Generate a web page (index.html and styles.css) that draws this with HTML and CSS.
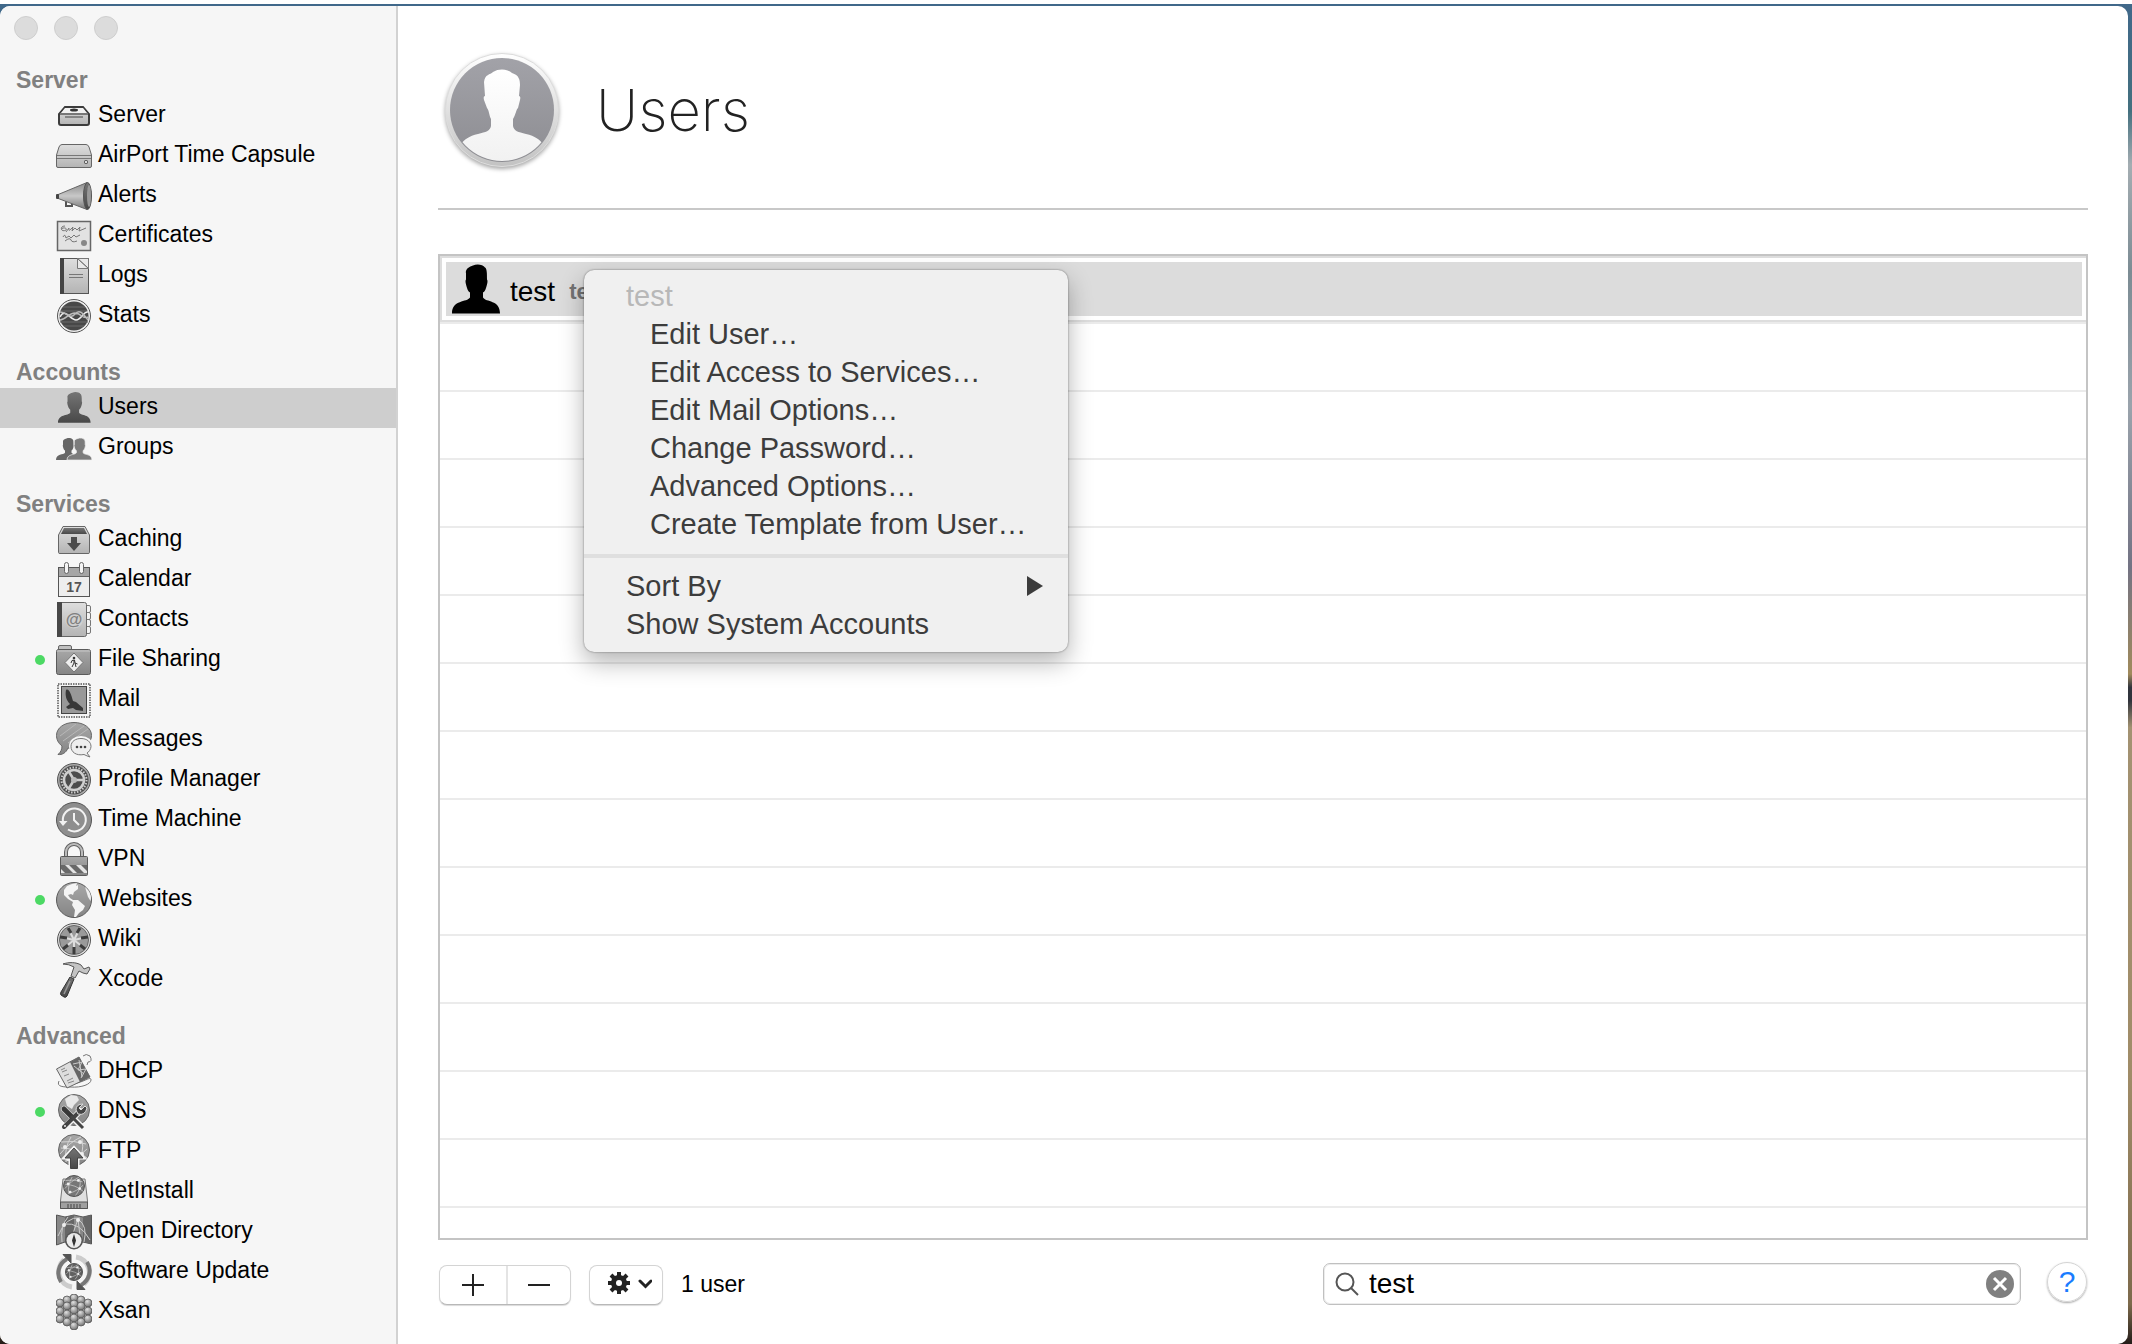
FILE: index.html
```
<!DOCTYPE html>
<html lang="en">
<head>
    <meta charset="UTF-8">
    <meta name="viewport" content="width=device-width, initial-scale=1.0">
    <title>Users</title>
    <link rel="stylesheet" href="styles.css">
</head>
<body>
    <!-- shared gradients and shapes -->
    <svg class="defs" width="0" height="0" aria-hidden="true">
        <defs>
            <linearGradient id="light" x1="0" y1="0" x2="0" y2="1"><stop offset="0" stop-color="#dedede"/><stop offset="1" stop-color="#b4b4b4"/></linearGradient>
            <linearGradient id="mid" x1="0" y1="0" x2="0" y2="1"><stop offset="0" stop-color="#a8a8a8"/><stop offset="1" stop-color="#858585"/></linearGradient>
            <linearGradient id="dark" x1="0" y1="0" x2="0" y2="1"><stop offset="0" stop-color="#757575"/><stop offset="1" stop-color="#484848"/></linearGradient>
            <linearGradient id="cone" x1="0" y1="0" x2="0" y2="1"><stop offset="0" stop-color="#8a8a8a"/><stop offset=".5" stop-color="#c8c8c8"/><stop offset="1" stop-color="#777"/></linearGradient>
            <linearGradient id="ring" x1="0" y1="0" x2="0" y2="1"><stop offset="0" stop-color="#fff"/><stop offset="1" stop-color="#c2c2c2"/></linearGradient>
            <linearGradient id="disc" x1="0" y1="0" x2="0" y2="1"><stop offset="0" stop-color="#a2a2a8"/><stop offset="1" stop-color="#8d8d92"/></linearGradient>
            <linearGradient id="face" x1="0" y1="0" x2="0" y2="1"><stop offset="0" stop-color="#fff"/><stop offset="1" stop-color="#f0f0f0"/></linearGradient>
            <radialGradient id="ball" cx=".4" cy=".3" r=".7"><stop offset="0" stop-color="#e0e0e0"/><stop offset="1" stop-color="#707070"/></radialGradient>
            <clipPath id="disc-clip"><circle cx="60" cy="60" r="51"/></clipPath>
            <path id="person" d="M14 9C13 5 17 2 21 1C25-1 31 0 33 3C35 4 35 9 35 15Q36 16 35 20C34 24 33 27 31 28V33C34 38 48 35 48 49H0C0 35 15 38 18 33V28C16 27 15 24 14 20Q13 16 14 15Z"/>
            <g id="net" fill="none" stroke="#d4d4d4">
                <path d="M5 8Q18 6 30 10M4 20Q14 8 25 3M10 28Q8 14 15 3M20 30Q29 20 26 5M5 14Q20 14 31 24M10 27Q22 24 31 15"/>
                <g fill="#eee" stroke="none"><circle cx="9" cy="13" r="2"/><circle cx="24" cy="8" r="2"/><circle cx="26" cy="20" r="2"/><circle cx="12" cy="25" r="2"/></g>
            </g>
        </defs>
    </svg>

    <div class="desktop">
        <div class="window">
            <aside class="sidebar">
                <div class="lights">
                    <button aria-label="Close"></button>
                    <button aria-label="Minimize"></button>
                    <button aria-label="Zoom"></button>
                </div>
                <nav>
                    <h2>Server</h2>
                    <ul>
                        <li><a href="#"><svg viewBox="0 0 36 36"><path d="M9 9H27L33 16V25Q33 27 31 27H5Q3 27 3 25V16Z" fill="url(#light)" stroke="#3c3c3c" stroke-width="2"/><path d="M9 10H27L31 15H5Z" fill="#f2f2f2"/><path d="M4 16H32" stroke="#777" stroke-width="2"/><path d="M9 19H27" stroke="#444"/><ellipse cx="18" cy="12" rx="4" ry="1.500" fill="#333"/></svg>Server</a></li>
                        <li><a href="#"><svg viewBox="0 0 36 36"><path d="M6 6.500H30Q32 6.500 33 9L35.500 17V28Q35.500 29.500 34 29.500H2Q.5 29.500 .5 28V17L3 9Q4 6.500 6 6.500Z" fill="url(#light)" stroke="#666"/><path d="M1 17.500H35M1 20.500H35" stroke="#777"/><rect x="28.500" y="22.500" width="3" height="3" rx="1" fill="#ddd" stroke="#444"/></svg>AirPort Time Capsule</a></li>
                        <li><a href="#"><svg viewBox="0 0 36 36"><path d="M10 21V28H16V24" fill="none" stroke="#555" stroke-width="2"/><path d="M1 17L31 4.500V31.500L1 20Z" fill="url(#cone)" stroke="#666"/><ellipse cx="31.500" cy="18" rx="4" ry="13.500" fill="url(#dark)" stroke="#555"/><ellipse cx="33" cy="18" rx="2" ry="11" fill="#999"/><rect y="16" width="3" height="5" rx="1" fill="#444"/></svg>Alerts</a></li>
                        <li><a href="#"><svg viewBox="0 0 36 36"><rect x="1.500" y="3.500" width="33" height="29" fill="#e2e2e2" stroke="#666" stroke-width="1.500"/><path d="M9 8C3 8 5 15 10 12C12 10 6 9 6 11M10 14L13 10Q12 14 15 11L17 9L16 13L19 10L21 12L24 9L23 13L30 10M7 19Q9 15 10 20L13 18L15 20L18 17L20 19L24 17M9 23Q14 19 15 22T21 23" fill="none" stroke="#777"/><circle cx="28" cy="25" r="3" fill="#888"/></svg>Certificates</a></li>
                        <li><a href="#"><svg viewBox="0 0 36 36"><rect x="4.500" y=".5" width="28" height="35" fill="url(#light)" stroke="#555"/><path d="M4 0H8V36H4Z" fill="#444"/><path d="M21.500 .5V10.500H32.500ZM21.500 .5L32.500 10.500V.5Z" fill="#e8e8e8" stroke="#777"/><path d="M13 16.500H27M13 19.500H27" stroke="#777"/></svg>Logs</a></li>
                        <li><a href="#"><svg viewBox="0 0 36 36"><circle cx="18" cy="18" r="16.500" fill="#eee" stroke="#555"/><circle cx="18" cy="18" r="14.500" fill="#484848"/><path d="M7 9H29M5 13H31M4 24H32M8 28H28" stroke="#6a6a6a"/><path d="M4 19C9 9 14 22 20 22S27 13 32 14" fill="none" stroke="#eee" stroke-width="1.500"/><path d="M4 14C11 14 14 22 19 16S28 17 32 22M4 22C10 22 12 15 19 15S26 22 32 19" fill="none" stroke="#bbb" stroke-width="1.500"/></svg>Stats</a></li>
                    </ul>
                    <h2>Accounts</h2>
                    <ul>
                        <li><a href="#" class="active"><svg viewBox="0 0 36 36"><g transform="translate(2 2) scale(.68 .63)" fill="url(#dark)"><use href="#person"/></g></svg>Users</a></li>
                        <li><a href="#"><svg viewBox="0 0 36 36"><g transform="translate(0 8) scale(.5 .45)" fill="#666"><use href="#person"/></g><g transform="translate(11 8) scale(.52 .45)" fill="#7c7c7c" stroke="#f0f0f0" stroke-width="1.500"><use href="#person"/></g></svg>Groups</a></li>
                    </ul>
                    <h2>Services</h2>
                    <ul>
                        <li><a href="#"><svg viewBox="0 0 36 36"><path d="M7 4.500H29L33.500 13V30.500Q33.500 31.500 32 31.500H4Q2.500 31.500 2.500 30.500V13Z" fill="url(#light)" stroke="#666"/><path d="M8 6H28L31 12H5Z" fill="url(#dark)"/><path d="M15 15H21V21H25L18 29L11 21H15Z" fill="#4c4c4c"/></svg>Caching</a></li>
                        <li><a href="#"><svg viewBox="0 0 36 36"><rect x="2.500" y="5.500" width="31" height="29" fill="#eee" stroke="#555"/><path d="M3 6H33V15H3Z" fill="#a6a6a6"/><path d="M3 14.500H33" stroke="#666"/><rect x="8.500" y=".5" width="4" height="11" rx="2" fill="#f4f4f4" stroke="#666"/><rect x="23.500" y=".5" width="4" height="11" rx="2" fill="#f4f4f4" stroke="#666"/><text x="18" y="30" text-anchor="middle" font-size="14" font-weight="bold" fill="#555">17</text></svg>Calendar</a></li>
                        <li><a href="#"><svg viewBox="0 0 36 36"><path d="M29 3.500H33Q34.500 3.500 34.500 5V9Q34.500 10.500 33 10.500Q34.500 10.500 34.500 12V16Q34.500 17.500 33 17.500Q34.500 17.500 34.500 19V23Q34.500 24.500 33 24.500Q34.500 24.500 34.500 26V30Q34.500 31.500 33 31.500H29M29 10.500H33M29 17.500H33M29 24.500H33" fill="#f4f4f4" stroke="#777"/><rect x="1.500" y=".5" width="29" height="34" rx="2" fill="url(#light)" stroke="#666"/><path d="M1 0H6V35H1Z" fill="#484848"/><circle cx="18" cy="17.500" r="9" fill="#d0d0d0"/><text x="18" y="23" text-anchor="middle" font-size="17" font-weight="bold" fill="#808080">@</text></svg>Contacts</a></li>
                        <li><a href="#" class="running"><svg viewBox="0 0 36 36"><path d="M2.500 8V5Q2.500 3.500 4 3.500H14Q15.500 3.500 15.500 5V8" fill="#c0c0c0" stroke="#666"/><rect x=".5" y="7.500" width="34" height="25" rx="2" fill="url(#mid)" stroke="#5a5a5a"/><path d="M1 9H34" stroke="#c8c8c8"/><path d="M18 11L27 20.500L18 30L9 20.500Z" fill="#eee" stroke="#777"/><circle cx="18" cy="16" r="1.300" fill="#333"/><path d="M15 21L16 18.500L18.500 18L19 21L21.500 22M18 18V21L16 25M19 21L20 25" fill="none" stroke="#333"/></svg>File Sharing</a></li>
                        <li><a href="#"><svg viewBox="0 0 36 36"><rect x="2" y="2" width="32" height="33" fill="#f4f4f4" stroke="#555" stroke-width="1.500" stroke-dasharray="1.500 1"/><rect x="5.500" y="4.500" width="25" height="27" fill="#989898" stroke="#444"/><path d="M10 8C13 6 15 12 17 19L20 20L27 26V29L20 28L17 26L12 27L10 25L14 22C10 18 9 13 10 8Z" fill="#383838"/></svg>Mail</a></li>
                        <li><a href="#"><svg viewBox="0 0 36 36"><path d="M18 .5C28 .5 35.500 6 35.500 13.500S28 27 18 27L12 26C10 31 6 33 2 32.500C5 30 6 27 6 24C2 21 .5 17 .5 13.500C.5 6 8 .5 18 .5Z" fill="url(#mid)" stroke="#666"/><path d="M4 14L20 2M7 19L28 4M12 21L32 7" stroke="#b8b8b8"/><path d="M25 15.500C31 15.500 35.500 19 35.500 24C35.500 27 34 29 31 31L35 35.500Q31 35 28 32.500C20 34 14.500 30 14.500 24.500S19 15.500 25 15.500Z" fill="#f0f0f0" stroke="#f6f6f6" stroke-width="3"/><path d="M25 16.500C31 16.500 35 20 35 24.500C35 27 33 30 31 31L34 35Q31 34 28 32.500C20 34 15 30 15 24.500S20 16.500 25 16.500Z" fill="#eee" stroke="#777"/><g fill="#444"><circle cx="21" cy="25" r="1.300"/><circle cx="25" cy="25" r="1.300"/><circle cx="29" cy="25" r="1.300"/></g></svg>Messages</a></li>
                        <li><a href="#"><svg viewBox="0 0 36 36"><circle cx="18" cy="18" r="16.500" fill="#aaa" stroke="#555"/><circle cx="18" cy="18" r="14.500" fill="#4c4c4c"/><circle cx="18" cy="18" r="12.500" fill="none" stroke="#ccc" stroke-width="2" stroke-dasharray="1.500 1.500"/><circle cx="18" cy="18" r="10" fill="none" stroke="#d0d0d0" stroke-width="2.500"/><path d="M18 18L12.500 9M18 18H28M18 18L12.500 27" stroke="#ccc" stroke-width="2.500"/><circle cx="18" cy="18" r="3" fill="#bbb"/></svg>Profile Manager</a></li>
                        <li><a href="#"><svg viewBox="0 0 36 36"><circle cx="18" cy="18" r="17.500" fill="#8e8e8e" stroke="#555"/><path d="M7 20A11.500 11.500 0 1 1 12 27.500" fill="none" stroke="#f2f2f2" stroke-width="2"/><path d="M3 19H11.500L7 24Z" fill="#f2f2f2"/><path d="M18 11V18L23 23" fill="none" stroke="#f2f2f2" stroke-width="2"/></svg>Time Machine</a></li>
                        <li><a href="#"><svg viewBox="0 0 36 36"><path d="M10 15V10A8 8 0 0 1 26 10V15" fill="none" stroke="#606060" stroke-width="4"/><path d="M10 15V10A8 8 0 0 1 26 10V15" fill="none" stroke="#bbb" stroke-width="2"/><rect x="4.500" y="14.500" width="27" height="19" rx="1" fill="url(#mid)" stroke="#5a5a5a"/><path d="M5 23H31V31H5Z" fill="#e4e4e4"/><path d="M5 23H9L17 31H9L5 27ZM13 23H20L28 31H21ZM25 23H31V29Z" fill="#686868"/></svg>VPN</a></li>
                        <li><a href="#" class="running"><svg viewBox="0 0 36 36"><circle cx="18" cy="18" r="17.500" fill="url(#mid)" stroke="#5a5a5a"/><path d="M8 8L11 4L16 2L21 1L20 4L22 3L22 7L18 10L17 13L15 12L12 13L14 16L17 18L22 18L29 24L27 28L23 31L20 35H18L19 28L16 23L17 20L12 17L8 13Z" fill="#f4f4f4"/><path d="M29 5C34 9 36 14 34.500 19L32 15Z" fill="#eee"/></svg>Websites</a></li>
                        <li><a href="#"><svg viewBox="0 0 36 36"><circle cx="18" cy="18" r="16.500" fill="#ddd" stroke="#555"/><circle cx="18" cy="18" r="14.500" fill="#9a9a9a" stroke="#666"/><path d="M18 18V31M18 18L8 26M18 18L5 15M18 18L12 6M18 18L24 6M18 18L31 15M18 18L28 26" stroke="#ddd" stroke-width="2"/><path d="M18 25V32M12 23L7 27M11 16L4 15M15 11L12 6M21 11L24 6M25 16L32 15M24 23L29 27" stroke="#3c3c3c" stroke-width="3"/></svg>Wiki</a></li>
                        <li><a href="#"><svg viewBox="0 0 36 36"><path d="M7 2C13 0 20 0 25 3L28 7L33 5L34 7L31 12L27 11L23 9L19 16L15 14L18 5Q13 2 7 2Z" fill="#c4c4c4" stroke="#555"/><path d="M14 15L18 17L11 34Q10 36 8 35L5 33Q4 32 5 30Z" fill="url(#dark)" stroke="#333"/><path d="M14 19L8 32" stroke="#999" stroke-width="1.500"/></svg>Xcode</a></li>
                    </ul>
                    <h2>Advanced</h2>
                    <ul>
                        <li><a href="#"><svg viewBox="0 0 36 36"><path d="M3 27C0 33 8 33 14 33C26 34 35 30 35 26C35 22 30 27 18 30" fill="none" stroke="#777"/><path d="M.5 15L23 3L34 23L11 34Z" fill="#ddd" stroke="#666"/><path d="M14 8L23 3L34 23L24 28Z" fill="#666"/><path d="M17 10L26 8L22 16L30 15L25 24M18 12L28 20M23 6L26 23" fill="none" stroke="#ccc"/><path d="M5 16L9 14M6 18L11 16M8 22L13 20M11 27L17 24M12 29L18 27" stroke="#888"/><path d="M27 2Q30-1 34 2Q37 8 32 8L31 11" fill="#f4f4f4" stroke="#777"/></svg>DHCP</a></li>
                        <li><a href="#" class="running"><svg viewBox="0 0 36 36"><circle cx="18" cy="16" r="15.500" fill="url(#mid)" stroke="#666"/><path d="M9 5L15 1L21 2L23 6L18 11L16 15L11 12Z" fill="#e8e8e8"/><g stroke="#f4f4f4" stroke-width="6" stroke-linecap="round"><path d="M10 32L24 17M8 15L17 24L26 33"/></g><path d="M8 33L24 17" stroke="#444" stroke-width="4" stroke-linecap="round"/><path d="M29 12L25 16L23 14L27 10Q20 10 20 16L22 20Q29 22 31 14Z" fill="#444" stroke="#ddd"/><path d="M8 15L15 22" stroke="#383838" stroke-width="5" stroke-linecap="round"/><path d="M15 22L27 34" stroke="#444" stroke-width="3"/><circle cx="9" cy="32" r="1" fill="#eee"/></svg>DNS</a></li>
                        <li><a href="#"><svg viewBox="0 0 36 36"><circle cx="18" cy="16" r="15.500" fill="url(#mid)" stroke="#666"/><use href="#net"/><path d="M18 13.500L28 24H22V35H14V24H8Z" fill="url(#dark)" stroke="#f4f4f4" stroke-width="3"/><path d="M18 14L27 24H21.500V34.500H14.500V24H9Z" fill="url(#dark)" stroke="#444"/></svg>FTP</a></li>
                        <li><a href="#"><svg viewBox="0 0 36 36"><path d="M7 5H29L31.500 27V34.500H4.500V27Z" fill="#e0e0e0" stroke="#777"/><path d="M4.500 28H31.500V34.500H4.500Z" fill="#a0a0a0" stroke="#555"/><path d="M12 30V34M15 30V34M18 30V34M21 30V34M24 30V34" stroke="#444"/><circle cx="18" cy="12" r="10.500" fill="#777" stroke="#555"/><g transform="translate(6 1) scale(.68)"><use href="#net"/></g></svg>NetInstall</a></li>
                        <li><a href="#"><svg viewBox="0 0 36 36"><path d="M.5 1L9 3L18 1L27 3L35.500 1V30L27 28L18 31L9 28L.5 31Z" fill="#888" stroke="#555"/><path d="M9 3L18 1V31L9 28ZM27 3L35 1V30L27 28Z" fill="#666"/><path d="M2 22Q10 2 24 4M8 10Q24 8 34 26M22 5Q32 12 28 28M6 28Q4 12 12 3M14 28L22 5L24 22" fill="none" stroke="#ccc"/><circle cx="8" cy="11" r="2" fill="#eee"/><circle cx="22" cy="6" r="2" fill="#eee"/><circle cx="18" cy="26.500" r="9" fill="#555"/><circle cx="18" cy="26.500" r="7.500" fill="#ececec"/><path d="M18 20L20 26.500L18 33L16 26.500Z" fill="#333"/></svg>Open Directory</a></li>
                        <li><a href="#"><svg viewBox="0 0 36 36"><path d="M16 33A15.500 15.500 0 0 1 8 6M20 3A15.500 15.500 0 0 1 28 30" fill="none" stroke="#ccc" stroke-width="5"/><path d="M5 28A16 16 0 0 1 11 5M31 8A16 16 0 0 1 25 31" fill="none" stroke="#777" stroke-width="4"/><path d="M7 .5H15V9ZM29 35.500H21V27Z" fill="#555" stroke="#555"/><circle cx="18" cy="18" r="8.500" fill="#606060" stroke="#555"/><g transform="translate(8 9) scale(.55)"><use href="#net"/></g></svg>Software Update</a></li>
                        <li><a href="#"><svg viewBox="0 0 36 36"><g fill="url(#ball)" stroke="#585858" stroke-width=".8"><circle cx="18" cy="4" r="4"/><circle cx="11" cy="6" r="4"/><circle cx="25" cy="6" r="4"/><circle cx="4" cy="9" r="4"/><circle cx="32" cy="9" r="4"/><circle cx="18" cy="10" r="4"/><circle cx="4" cy="17" r="4"/><circle cx="32" cy="17" r="4"/><circle cx="4" cy="25" r="4"/><circle cx="32" cy="25" r="4"/><circle cx="11" cy="12" r="4"/><circle cx="25" cy="12" r="4"/><circle cx="11" cy="20" r="4"/><circle cx="25" cy="20" r="4"/><circle cx="11" cy="28" r="4"/><circle cx="25" cy="28" r="4"/><circle cx="18" cy="16" r="4"/><circle cx="18" cy="24" r="4"/><circle cx="18" cy="32" r="4"/></g></svg>Xsan</a></li>
                    </ul>
                </nav>
            </aside>

            <main class="content">
                <header class="page-header">
                    <svg class="avatar" viewBox="0 0 120 120">
                        <circle cx="60" cy="60" r="56.500" fill="url(#ring)" stroke="#dcdcdc"/>
                        <circle cx="60" cy="60" r="52" fill="url(#disc)"/>
                        <g clip-path="url(#disc-clip)"><path d="M42 32C43 24 48 25 51 22C57 18 66 19 70 23C77 25 78 30 78 35L77 46Q79 46 78 50L76 58C74 60 74 64 71 69V76C72 81 76 82 84 84C93 86 98 90 101 94V120H19V94C22 90 27 86 36 84C44 82 48 81 49 76V69C47 65 47 60 45 58L42 50Q41 46 43 46Z" fill="url(#face)"/></g>
                    </svg>
                    <h1>Users</h1>
                </header>

                <section class="user-list">
                    <table>
                        <tr>
                            <td>
                                <div class="user">
                                    <svg viewBox="0 0 48 49"><use href="#person"/></svg>
                                    <span>test</span>
                                    <strong>test</strong>
                                </div>
                            </td>
                        </tr>
                    </table>

                    <div class="menu">
                        <button class="title" disabled>test</button>
                        <button class="sub">Edit User…</button>
                        <button class="sub">Edit Access to Services…</button>
                        <button class="sub">Edit Mail Options…</button>
                        <button class="sub">Change Password…</button>
                        <button class="sub">Advanced Options…</button>
                        <button class="sub">Create Template from User…</button>
                        <hr>
                        <button>Sort By <svg viewBox="0 0 16 20"><path d="M0 0L16 10L0 20Z" fill="#3c3c3c"/></svg></button>
                        <button>Show System Accounts</button>
                    </div>
                </section>

                <footer class="toolbar">
                    <div class="segmented">
                        <button aria-label="Add user"><svg viewBox="0 0 22 22"><path d="M11 0V22M0 11H22" stroke="#222" stroke-width="2"/></svg></button>
                        <button aria-label="Remove user"><svg viewBox="0 0 22 22"><path d="M0 11H22" stroke="#222" stroke-width="2"/></svg></button>
                    </div>
                    <button class="gear" aria-label="Actions">
                        <svg viewBox="0 0 44 22"><g stroke="#222" stroke-width="4"><path d="M11 0V22M0 11H22M3 3L19 19M19 3L3 19"/></g><circle cx="11" cy="11" r="8" fill="#222"/><circle cx="11" cy="11" r="3" fill="#fff"/><path d="M32 9L37.500 14.500L43 9" fill="none" stroke="#222" stroke-width="3" stroke-linecap="round"/></svg>
                    </button>
                    <span class="count">1 user</span>
                    <div class="search">
                        <label for="search" aria-label="Search users"><svg viewBox="0 0 24 24"><circle cx="10" cy="10" r="8.500" fill="none" stroke="#555" stroke-width="2"/><path d="M16 16L23 23" stroke="#555" stroke-width="2"/></svg></label>
                        <input type="text" id="search" value="test">
                        <button aria-label="Clear"><svg viewBox="0 0 28 28"><circle cx="14" cy="14" r="14" fill="#808080"/><path d="M8 8L20 20M20 8L8 20" stroke="#fff" stroke-width="3"/></svg></button>
                    </div>
                    <button class="help" aria-label="Help">?</button>
                </footer>
            </main>
        </div>
    </div>
</body>
</html>
```
FILE: styles.css
```
* {
    box-sizing: border-box;
}
body {
    margin: 0;
    padding-top: 4px;
    min-height: 100vh;
    display: flex;
    background: #fff;
    font-family: "Liberation Sans", Helvetica, Arial, sans-serif;
    font-size: 23px;
    color: #000;
}
button, input {
    font-family: inherit;
    border: none;
    background: none;
    padding: 0;
    margin: 0;
}
svg {
    display: block;
    flex-shrink: 0;
}
.defs {
    position: absolute;
}
.desktop {
    flex: 1;
    display: flex;
    padding: 2px 4px 0 0;
    background: linear-gradient(#40688a 0, #44707f 8%, #a4adb2 12%, #7c8c94 20%, #9aa3ac 30%, #737384 42%, #a08a5c 50%, #30343c 51%, #30343c 52%, #a39272 54%, #a08c68 80%, #7d6a4c 97%, #241c18 100%);
}
.window {
    flex: 1;
    display: flex;
    background: #fff;
    border-radius: 10px;
    overflow: hidden;
}

/* sidebar */
.sidebar {
    width: 398px;
    flex-shrink: 0;
    background: #f6f6f6;
    border-right: 2px solid #d2d2d2;
}
.lights {
    display: flex;
    gap: 16px;
    padding: 10px 14px 4px;
}
.lights button {
    width: 24px;
    height: 24px;
    border-radius: 50%;
    background: #dcdcdc;
    border: 1px solid #cecece;
}
.sidebar h2 {
    margin: 0;
    padding: 21px 16px 0;
    height: 52px;
    font-size: 23px;
    line-height: 30px;
    color: #808080;
}
.sidebar ul {
    list-style: none;
    margin: 0;
    padding: 0;
}
.sidebar a {
    position: relative;
    display: flex;
    gap: 6px;
    height: 40px;
    padding-left: 56px;
    line-height: 36px;
    color: #000;
    text-decoration: none;
}
.sidebar a svg {
    width: 36px;
    height: 36px;
    margin-top: 2px;
}
.sidebar .active {
    background: #cecece;
}
.sidebar .running::before {
    content: "";
    position: absolute;
    left: 35px;
    top: 15px;
    width: 10px;
    height: 10px;
    border-radius: 50%;
    background: #4cd964;
}

/* content */
.content {
    flex: 1;
    display: flex;
    flex-direction: column;
    padding: 0 40px;
}
.page-header {
    display: flex;
    align-items: center;
    gap: 34px;
    height: 204px;
    padding-top: 6px;
    border-bottom: 2px solid #c8c8c8;
}
.avatar {
    width: 120px;
    height: 120px;
    margin-left: 4px;
    filter: drop-shadow(0 2px 2px rgba(0, 0, 0, 0.35));
}
.page-header h1 {
    margin: 0;
    font-family: Inter, sans-serif;
    font-size: 58px;
    font-weight: 200;
    color: #222;
}
.user-list {
    position: relative;
    flex: 1;
    margin-top: 44px;
    border: 2px solid #c4c4c4;
    background: repeating-linear-gradient(#fff 0, #fff 66px, #ebebeb 66px, #ebebeb 68px);
}
.user-list table {
    width: 100%;
    border-collapse: collapse;
}
.user-list td {
    padding: 0 0 2px;
}
.user {
    display: flex;
    align-items: center;
    height: 66px;
    padding: 0 10px;
    border: 2px solid #ddd;
    border-right: none;
    background: #dcdcdc;
    box-shadow: inset 0 0 0 4px #fff;
    font-size: 28px;
}
.user svg {
    width: 48px;
    height: 50px;
    margin-right: 10px;
}
.user span, .user strong {
    padding-top: 6px;
}
.user strong {
    margin-left: 14px;
    font-size: 22px;
    color: #737373;
}

/* context menu */
.menu {
    position: absolute;
    left: 144px;
    top: 14px;
    width: 484px;
    padding: 7px 0 9px;
    background: #f0f0f0;
    border-radius: 10px;
    box-shadow: 0 0 2px rgba(0, 0, 0, 0.5), 0 10px 24px rgba(0, 0, 0, 0.3);
}
.menu button {
    display: flex;
    align-items: center;
    justify-content: space-between;
    width: 100%;
    padding: 0 25px 0 42px;
    font-size: 29px;
    line-height: 38px;
    color: #3c3c3c;
}
.menu .title {
    color: #b8b8b8;
}
.menu .sub {
    padding-left: 66px;
}
.menu svg {
    width: 16px;
    height: 20px;
}
.menu hr {
    margin: 11px 0 9px;
    border: none;
    height: 4px;
    background: #dfdfdf;
}

/* bottom bar */
.toolbar {
    display: flex;
    align-items: center;
    height: 104px;
    padding: 23px 0 39px;
}
.segmented, .gear {
    display: flex;
    height: 40px;
    border: 1px solid #d4d4d4;
    border-bottom-color: #b8b8b8;
    border-radius: 8px;
    background: #fff;
    box-shadow: 0 1px 1px rgba(0, 0, 0, 0.15);
}
.segmented {
    margin: 2px 18px 0 1px;
}
.segmented button {
    display: flex;
    align-items: center;
    justify-content: center;
    width: 66px;
}
.segmented button + button {
    width: 64px;
    border-left: 2px solid #e4e4e4;
}
.segmented svg {
    width: 22px;
    height: 22px;
}
.gear {
    width: 74px;
    margin-top: 2px;
    padding: 6px 10px 0 18px;
}
.gear svg {
    width: 44px;
    height: 22px;
}
.count {
    margin-left: 18px;
}
.search {
    display: flex;
    align-items: center;
    flex: 0 1 698px;
    height: 42px;
    margin-left: auto;
    padding: 0 6px 0 11px;
    border: 1px solid #c0c0c0;
    border-radius: 7px;
    box-shadow: inset 0 0 0 1px #ececec;
}
.search svg {
    width: 24px;
    height: 24px;
}
.search input {
    flex: 1;
    min-width: 0;
    margin-left: 10px;
    font-size: 28px;
    outline: none;
}
.search button svg {
    width: 28px;
    height: 28px;
}
.help {
    width: 40px;
    height: 40px;
    margin: 0 1px 4px 26px;
    border: 1px solid #d4d4d4;
    border-radius: 50%;
    box-shadow: 0 1px 2px rgba(0, 0, 0, 0.35);
    font-size: 30px;
    line-height: 38px;
    color: #1a7cff;
}
```
